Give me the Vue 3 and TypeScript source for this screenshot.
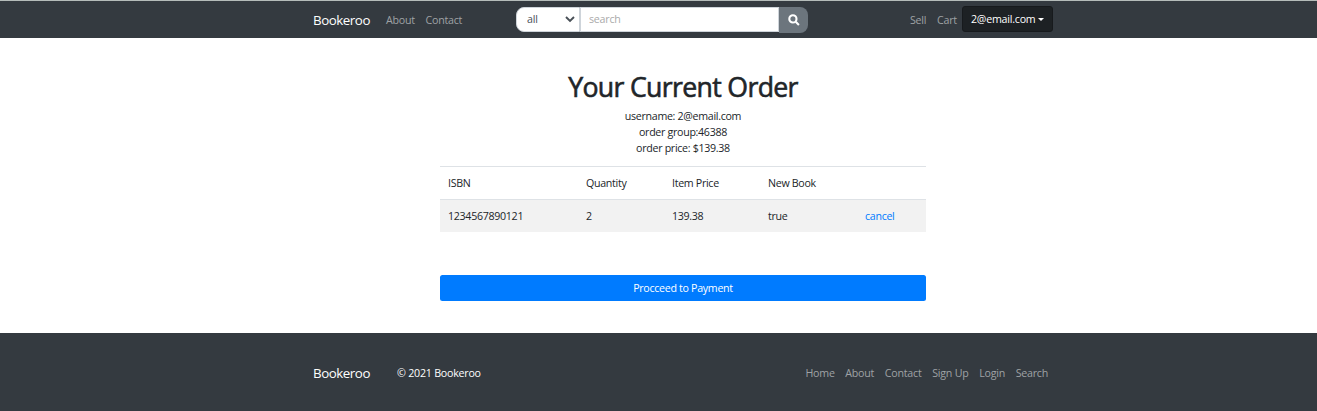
<script setup lang="ts">
import { ref } from 'vue'

interface OrderItem {
  isbn: string
  quantity: number
  price: string
  isNew: boolean
}

const query = ref('')
const category = ref('all')
const columns: string[] = ['ISBN', 'Quantity', 'Item Price', 'New Book', '']
const items: OrderItem[] = [{ isbn: '1234567890121', quantity: 2, price: '139.38', isNew: true }]
const footerLinks: string[] = ['Home', 'About', 'Contact', 'Sign Up', 'Login', 'Search']
</script>

<template>
  <div class="page">
    <header class="navbar">
      <nav class="inner">
        <a class="brand">Bookeroo</a>
        <div class="links main-links"><a>About</a><a>Contact</a></div>
        <form class="search" @submit.prevent>
          <div class="select-wrap">
            <select v-model="category" class="category"><option value="all">all</option></select>
            <svg class="chevron" viewBox="0 0 10 7"><path d="M1 1l4 4 4-4" /></svg>
          </div>
          <input v-model="query" class="query" type="text" placeholder="search" />
          <button class="search-btn" aria-label="search">
            <svg viewBox="0 0 12 12"><circle cx="4.9" cy="4.9" r="3.6" /><path d="M7.7 7.7l3.2 3.2" /></svg>
          </button>
        </form>
        <div class="links user-links"><a>Sell</a><a>Cart</a></div>
        <button class="account"><span>2@email.com</span><i class="caret"></i></button>
      </nav>
    </header>

    <main class="order">
      <h1>Your Current Order</h1>
      <p>username: 2@email.com</p>
      <p>order group:46388</p>
      <p>order price: $139.38</p>
      <table>
        <colgroup><col class="c1" /><col class="c2" /><col class="c3" /><col class="c4" /><col /></colgroup>
        <thead>
          <tr><td v-for="(column, i) in columns" :key="i">{{ column }}</td></tr>
        </thead>
        <tbody>
          <tr v-for="item in items" :key="item.isbn">
            <td>{{ item.isbn }}</td>
            <td>{{ item.quantity }}</td>
            <td>{{ item.price }}</td>
            <td>{{ item.isNew }}</td>
            <td><a class="cancel">cancel</a></td>
          </tr>
        </tbody>
      </table>
      <button class="pay">Procceed to Payment</button>
    </main>

    <footer>
      <div class="inner">
        <a class="brand">Bookeroo</a>
        <span class="copyright">© 2021 Bookeroo</span>
        <div class="links footer-links"><a v-for="link in footerLinks" :key="link">{{ link }}</a></div>
      </div>
    </footer>
  </div>
</template>

<style>
body {
  margin: 0;
  background: #fff;
}
</style>

<style scoped>
* {
  box-sizing: border-box;
}
.page {
  height: 411px;
  display: flex;
  flex-direction: column;
  overflow: hidden;
  font: 10.67px/16px "Segoe UI", "Open Sans", "Noto Sans", sans-serif;
  letter-spacing: -0.23px;
  color: #212529;
}
button,
input,
select {
  font: inherit;
  letter-spacing: inherit;
  margin: 0;
  outline: 0;
}
.navbar {
  height: 38px;
  flex: none;
  background: #343a40;
  border-top: 1px solid #b5bcba;
}
.inner {
  width: 740px;
  margin-left: 313px;
  display: flex;
  align-items: center;
}
.navbar .inner {
  height: 37px;
}
.brand {
  width: 73px;
  font-size: 13.33px;
  letter-spacing: -0.46px;
  color: #fff;
  white-space: nowrap;
}
.links {
  display: flex;
  gap: 10.67px;
  color: #9fa2a5;
  white-space: nowrap;
}
.main-links {
  width: 130px;
}
.search {
  width: 292px;
  height: 26px;
  display: flex;
}
.select-wrap {
  display: flex;
  position: relative;
  width: 64px;
  height: 25px;
}
.category {
  appearance: none;
  width: 64px;
  padding: 0 0 0 10px;
  border: 1px solid #ced4da;
  border-radius: 8px 0 0 8px;
  background: #fff;
  color: #495057;
}
.chevron {
  position: absolute;
  right: 5px;
  top: 9px;
  width: 10px;
  height: 7px;
  fill: none;
  stroke: #495057;
  stroke-width: 1.9;
}
.query {
  width: 199px;
  height: 25px;
  padding: 0 8px;
  border: 1px solid #ced4da;
  border-radius: 0;
  background: #fff;
}
.query::placeholder {
  color: #aaa;
  opacity: 1;
}
.search-btn {
  width: 29px;
  padding: 0;
  border: 0;
  border-radius: 0 8px 8px 0;
  background: #6c757d;
  display: flex;
  align-items: center;
  justify-content: center;
}
.search-btn svg {
  width: 12px;
  height: 12px;
  fill: none;
  stroke: #fff;
  stroke-width: 2.1;
}
.user-links {
  width: 52px;
  margin-left: 102px;
}
.account {
  width: 91px;
  height: 26px;
  margin-top: -1px;
  padding: 0 8px;
  display: flex;
  align-items: center;
  justify-content: space-between;
  border: 1px solid #171a1d;
  border-radius: 3px;
  background: #1d2124;
  color: #fff;
}
.caret {
  border: 3px solid transparent;
  border-top-color: #fff;
  border-bottom: 0;
}
.order {
  width: 486px;
  height: 295px;
  flex: none;
  margin-left: 440px;
  padding-top: 33px;
  text-align: center;
  letter-spacing: -0.31px;
}
h1 {
  margin: 0 0 5px;
  font-size: 26.67px;
  line-height: 32px;
  font-weight: 500;
  letter-spacing: -0.66px;
  -webkit-text-stroke: 0.6px #212529;
}
p {
  margin: 0;
}
table {
  width: 486px;
  margin-top: 10px;
  border-spacing: 0;
  table-layout: fixed;
  text-align: left;
}
.c1 {
  width: 138px;
}
.c2 {
  width: 86px;
}
.c3 {
  width: 96px;
}
.c4 {
  width: 97px;
}
td {
  height: 33px;
  padding: 0 8px;
  border-top: 1px solid #dee2e6;
}
tbody tr {
  background: #f2f2f2;
}
.cancel {
  color: #007bff;
}
.pay {
  width: 486px;
  height: 26px;
  margin-top: 43px;
  padding: 0;
  display: block;
  border: 0;
  border-radius: 2.5px;
  background: #007bff;
  color: #fff;
}
footer {
  height: 78px;
  flex: none;
  padding-top: 30px;
  background: #343a40;
}
footer .inner {
  height: 20px;
}
.copyright {
  margin-left: 11px;
  color: #fff;
}
.footer-links {
  margin-left: auto;
  margin-right: 5px;
}
</style>
